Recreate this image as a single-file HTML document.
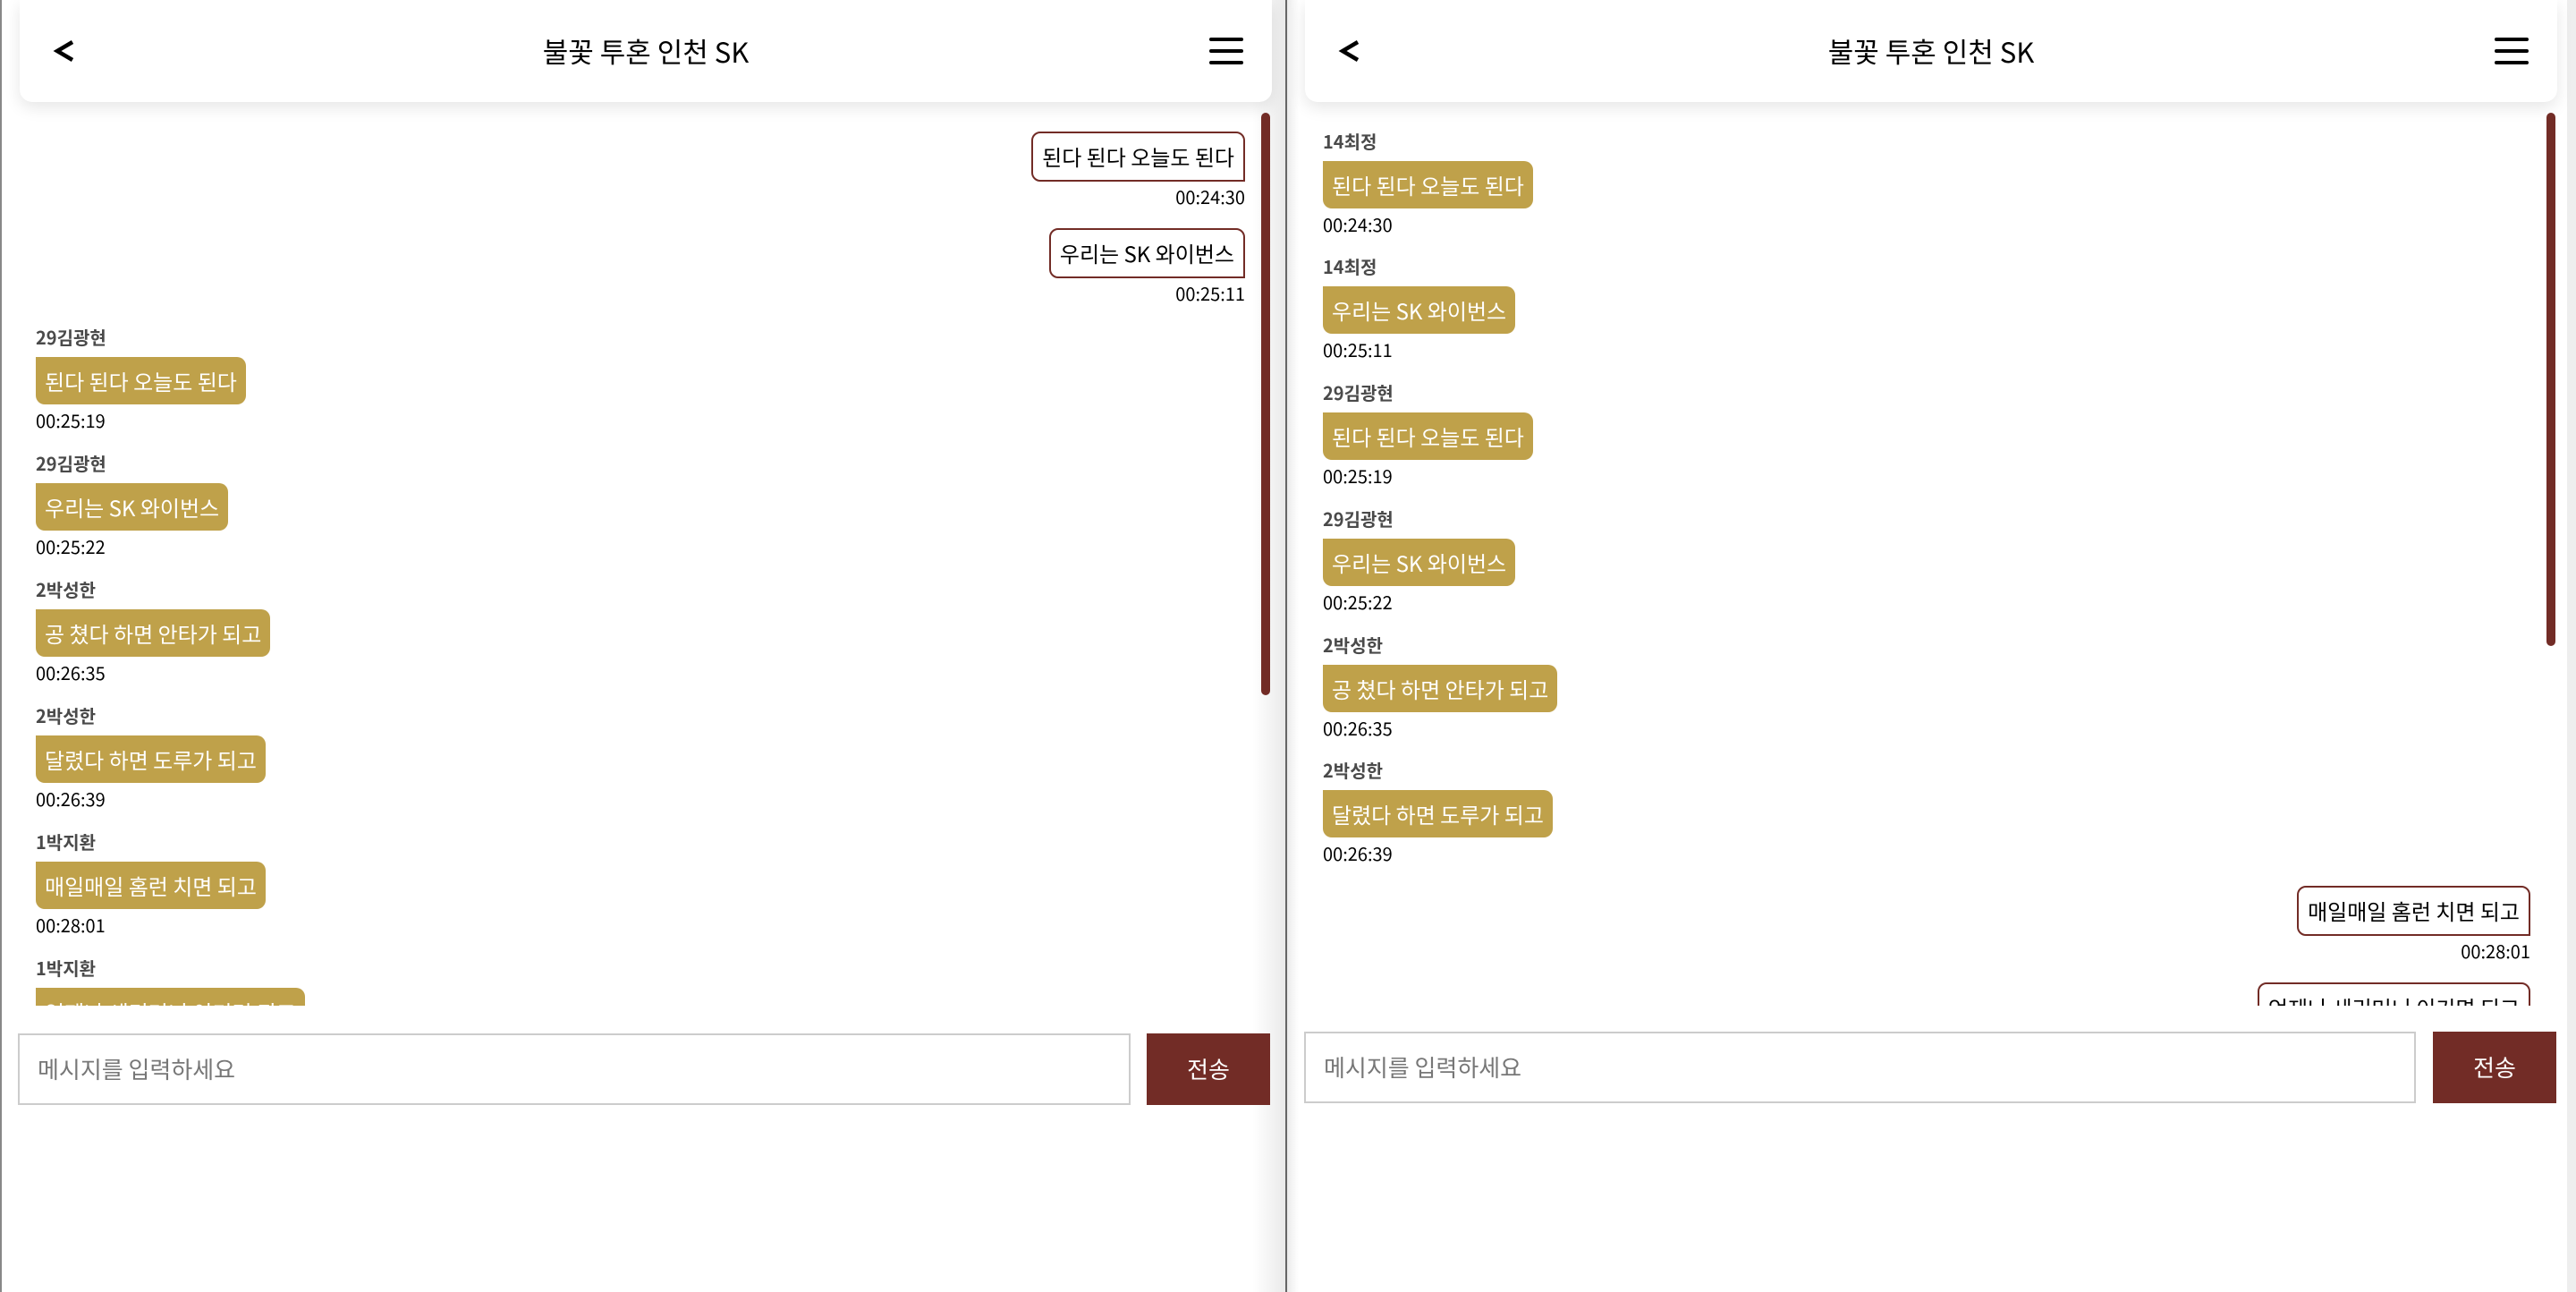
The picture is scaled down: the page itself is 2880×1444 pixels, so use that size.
<!DOCTYPE html>
<html><head><meta charset="utf-8">
<style>
*{margin:0;padding:0;box-sizing:border-box}
body{width:2880px;height:1444px;background:#fff;position:relative;overflow:hidden;font-family:"Noto Sans CJK KR","Liberation Sans",sans-serif;color:#000}
.panel{position:absolute;top:0;width:1440px;height:1444px;overflow:hidden}
.hdr{position:absolute;left:20px;top:0;width:1400px;height:114px;background:#fff;border-radius:0 0 14px 14px;box-shadow:0 6px 18px rgba(0,0,0,.10)}
.back{position:absolute;left:30px;top:32px;width:40px;height:50px}
.title{position:absolute;left:0;right:0;top:34px;text-align:center;font-size:31px;line-height:46px}
.menu{position:absolute;right:32px;top:42px;width:38px}
.menu i{display:block;height:4px;background:#000;border-radius:2px;margin-bottom:9px}
.sb{position:absolute;width:10px;background:#722c26;border-radius:5px;top:126px}
.msgs{position:absolute;left:0;top:114px;width:1400px;height:1010px;overflow:hidden}
.name{position:absolute;font-size:20px;font-weight:bold;color:#4a4a4a;line-height:26px}
.gb{position:absolute;background:#bfa14a;color:#fff;font-size:24px;line-height:53px;height:53px;padding:0 10px;border-radius:0 10px 10px 10px;white-space:nowrap}
.ob{position:absolute;border:2px solid #722c26;border-radius:10px 10px 0 10px;font-size:24px;line-height:52px;height:56px;padding:0 10px;white-space:nowrap;background:#fff}
.t{position:absolute;font-size:20px;line-height:24px}
.inp{position:absolute;border:2px solid #ccc;height:80px;font-size:26px;color:#777;line-height:76px;padding-left:20px}
.btn{position:absolute;background:#722c26;color:#fff;font-size:26px;text-align:center;line-height:80px;height:80px;width:138px}
</style></head><body>

<div class="panel" style="left:0;border-left:2px solid #888">
  <div style="position:absolute;right:0;top:0;width:40px;height:1444px;background:linear-gradient(to right,rgba(0,0,0,0),rgba(0,0,0,.09))"></div>
  <div style="position:absolute;right:1px;top:0;width:2px;height:1444px;background:#666"></div>
  <div class="hdr">
    <svg class="back" viewBox="0 0 40 50"><path d="M29 15 L12 25 L29 35" fill="none" stroke="#000" stroke-width="4.5"/></svg>
    <div class="title">불꽃 투혼 인천 SK</div>
    <div class="menu"><i></i><i></i><i></i></div>
  </div>
  <div class="msgs">
    <div class="ob" style="right:10px;top:33px">된다 된다 오늘도 된다</div>
    <div class="t" style="right:10px;top:94px">00:24:30</div>
    <div class="ob" style="right:10px;top:141px">우리는 SK 와이번스</div>
    <div class="t" style="right:10px;top:202px">00:25:11</div>

    <div class="name" style="left:38px;top:250px">29김광현</div>
    <div class="gb" style="left:38px;top:285px">된다 된다 오늘도 된다</div>
    <div class="t" style="left:38px;top:344px">00:25:19</div>

    <div class="name" style="left:38px;top:391px">29김광현</div>
    <div class="gb" style="left:38px;top:426px">우리는 SK 와이번스</div>
    <div class="t" style="left:38px;top:485px">00:25:22</div>

    <div class="name" style="left:38px;top:532px">2박성한</div>
    <div class="gb" style="left:38px;top:567px">공 쳤다 하면 안타가 되고</div>
    <div class="t" style="left:38px;top:626px">00:26:35</div>

    <div class="name" style="left:38px;top:673px">2박성한</div>
    <div class="gb" style="left:38px;top:708px">달렸다 하면 도루가 되고</div>
    <div class="t" style="left:38px;top:767px">00:26:39</div>

    <div class="name" style="left:38px;top:814px">1박지환</div>
    <div class="gb" style="left:38px;top:849px">매일매일 홈런 치면 되고</div>
    <div class="t" style="left:38px;top:908px">00:28:01</div>

    <div class="name" style="left:38px;top:955px">1박지환</div>
    <div class="gb" style="left:38px;top:990px">언제나 세리머니 이기면 되고</div>
  </div>
  <div class="sb" style="left:1408px;height:651px"></div>
  <div class="inp" style="left:18px;top:1155px;width:1244px">메시지를 입력하세요</div>
  <div class="btn" style="left:1280px;top:1155px">전송</div>
</div>

<div class="panel" style="left:1440px">
  <div style="position:absolute;left:0;top:0;width:12px;height:1444px;background:linear-gradient(to right,rgba(0,0,0,.07),rgba(0,0,0,0))"></div>
  <div style="position:absolute;right:0;top:0;width:10px;height:1444px;background:#eee"></div>
  <div class="hdr" style="left:19px">
    <svg class="back" viewBox="0 0 40 50"><path d="M29 15 L12 25 L29 35" fill="none" stroke="#000" stroke-width="4.5"/></svg>
    <div class="title">불꽃 투혼 인천 SK</div>
    <div class="menu"><i></i><i></i><i></i></div>
  </div>
  <div class="msgs">
    <div class="name" style="left:39px;top:31px">14최정</div>
    <div class="gb" style="left:39px;top:66px">된다 된다 오늘도 된다</div>
    <div class="t" style="left:39px;top:125px">00:24:30</div>

    <div class="name" style="left:39px;top:171px">14최정</div>
    <div class="gb" style="left:39px;top:206px">우리는 SK 와이번스</div>
    <div class="t" style="left:39px;top:265px">00:25:11</div>

    <div class="name" style="left:39px;top:312px">29김광현</div>
    <div class="gb" style="left:39px;top:347px">된다 된다 오늘도 된다</div>
    <div class="t" style="left:39px;top:406px">00:25:19</div>

    <div class="name" style="left:39px;top:453px">29김광현</div>
    <div class="gb" style="left:39px;top:488px">우리는 SK 와이번스</div>
    <div class="t" style="left:39px;top:547px">00:25:22</div>

    <div class="name" style="left:39px;top:594px">2박성한</div>
    <div class="gb" style="left:39px;top:629px">공 쳤다 하면 안타가 되고</div>
    <div class="t" style="left:39px;top:688px">00:26:35</div>

    <div class="name" style="left:39px;top:734px">2박성한</div>
    <div class="gb" style="left:39px;top:769px">달렸다 하면 도루가 되고</div>
    <div class="t" style="left:39px;top:828px">00:26:39</div>

    <div class="ob" style="right:11px;top:876px">매일매일 홈런 치면 되고</div>
    <div class="t" style="right:11px;top:937px">00:28:01</div>
    <div class="ob" style="right:11px;top:984px">언제나 세리머니 이기면 되고</div>
  </div>
  <div class="sb" style="left:1407px;height:596px"></div>
  <div class="inp" style="left:18px;top:1153px;width:1243px">메시지를 입력하세요</div>
  <div class="btn" style="top:1153px;left:1280px">전송</div>
</div>
</body></html>
